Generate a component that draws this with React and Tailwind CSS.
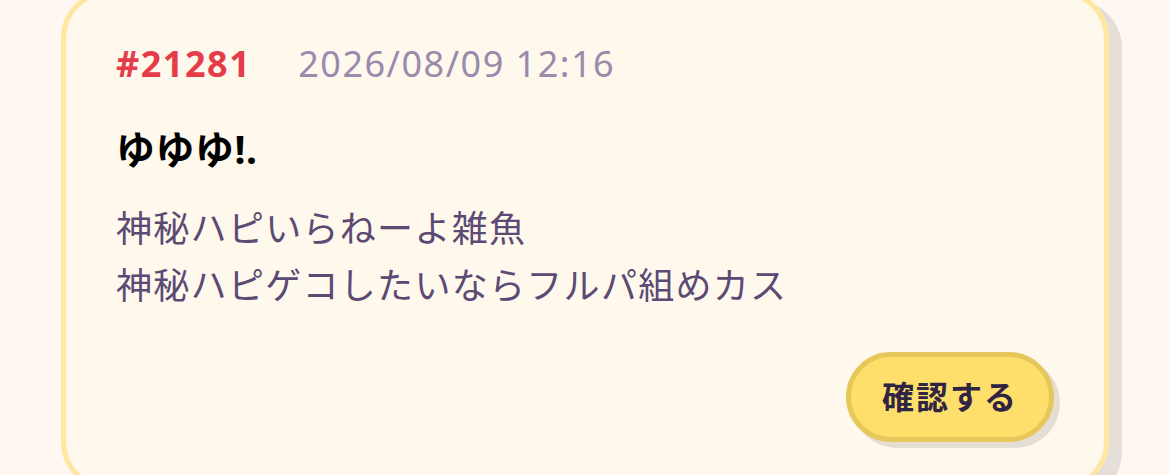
const font = { fontFamily: "'Noto Sans', 'Noto Sans CJK JP', sans-serif" };

const NoticeCard = ({ data }) => {
  return (
    <div className="mx-[61px] -mt-[10px] h-[500px] rounded-[48px] border-[5px] border-[#ffe6a1] bg-[#fef8ed] shadow-[13px_10px_0_#e6ded8] px-[50px] pt-[44px] flex flex-col">
      <div className="flex flex-row items-center gap-[47px] text-[36px] leading-[50px] tracking-[1.5px]">
        <span className="font-bold text-[#e63c4a]">#{data.no}</span>
        <span className="text-[#9a8aab]">{data.date}</span>
      </div>
      <div className="mt-[35px] text-[39px] leading-[50px] font-bold tracking-[0.5px] text-black">{data.title}</div>
      <div className="mt-[26px] text-[36px] leading-[57px] tracking-[1.3px] text-[#5b4a73]">
        {data.lines.map((line) => (
          <div key={line}>{line}</div>
        ))}
      </div>
      <div className="flex flex-row justify-end mt-[38px]">
        <button className="h-[90px] px-[31px] rounded-full border-[5px] border-[#e6c85a] bg-[#ffdf6b] shadow-[6px_6px_0_#e6ded4] text-[32px] font-bold tracking-[2px] text-[#2f2542]">
          確認する
        </button>
      </div>
    </div>
  );
};

export default function App() {
  const notice = {
    no: "21281",
    date: "2026/08/09 12:16",
    title: "ゆゆゆ!.",
    lines: ["神秘ハピいらねーよ雑魚", "神秘ハピゲコしたいならフルパ組めカス"],
  };

  return (
    <main className="w-[1170px] h-[475px] overflow-hidden bg-[#fff7f1]" style={font}>
      <NoticeCard data={notice} />
    </main>
  );
}
